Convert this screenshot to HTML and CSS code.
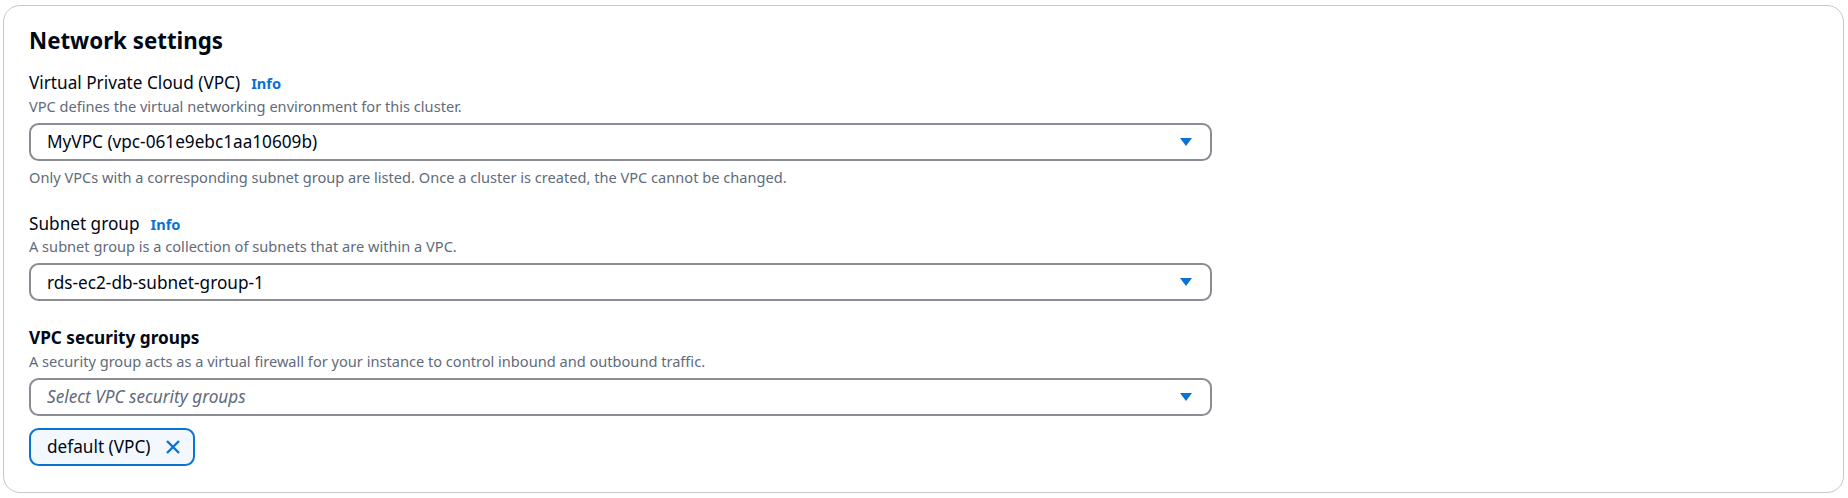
FILE: index.html
```html
<!DOCTYPE html>
<html lang="en">
<head>
<meta charset="utf-8">
<title>Network settings</title>
<link rel="stylesheet" href="styles.css">
</head>
<body>
<section class="card">
  <h2 class="card-title">Network settings</h2>

  <div class="field">
    <div class="label-row"><span class="label">Virtual Private Cloud (VPC)</span><a class="info" href="#">Info</a></div>
    <div class="desc">VPC defines the virtual networking environment for this cluster.</div>
    <div class="select">
      <span class="select-value">MyVPC (vpc-061e9ebc1aa10609b)</span>
      <svg class="caret" width="12" height="8" viewBox="0 0 12 8"><path d="M0 0 H12 L6 8 Z" fill="#0972d3"/></svg>
    </div>
    <div class="hint">Only VPCs with a corresponding subnet group are listed. Once a cluster is created, the VPC cannot be changed.</div>
  </div>

  <div class="field">
    <div class="label-row"><span class="label">Subnet group</span><a class="info" href="#">Info</a></div>
    <div class="desc">A subnet group is a collection of subnets that are within a VPC.</div>
    <div class="select">
      <span class="select-value">rds-ec2-db-subnet-group-1</span>
      <svg class="caret" width="12" height="8" viewBox="0 0 12 8"><path d="M0 0 H12 L6 8 Z" fill="#0972d3"/></svg>
    </div>
  </div>

  <div class="field">
    <div class="label-row"><span class="label label-bold">VPC security groups</span></div>
    <div class="desc">A security group acts as a virtual firewall for your instance to control inbound and outbound traffic.</div>
    <div class="select">
      <span class="select-value placeholder">Select VPC security groups</span>
      <svg class="caret" width="12" height="8" viewBox="0 0 12 8"><path d="M0 0 H12 L6 8 Z" fill="#0972d3"/></svg>
    </div>
    <div class="tokens">
      <div class="token">
        <span class="token-text">default (VPC)</span>
        <svg class="token-x" width="16" height="16" viewBox="0 0 16 16"><path d="M2 2 L14 14 M14 2 L2 14" stroke="#0972d3" stroke-width="2.4" fill="none"/></svg>
      </div>
    </div>
  </div>
</section>
</body>
</html>
```

FILE: styles.css
```css
html, body {
  margin: 0;
  padding: 0;
  background: #ffffff;
}

body {
  font-family: "Noto Sans", "Open Sans", "Liberation Sans", sans-serif;
  color: #000716;
  padding: 5px 4px 6px 3px;
}

.card {
  border: 1px solid #c6c6cd;
  border-radius: 17px;
  padding: 22px 25px 26px 25px;
}

.card-title {
  margin: 0;
  font-size: 22.3px;
  line-height: 26px;
  font-weight: 700;
}

.field {
  max-width: 1183px;
  margin-top: 25px;
}

.card-title + .field {
  margin-top: 17px;
}

.label-row {
  display: flex;
  align-items: baseline;
  gap: 11px;
  line-height: 24px;
}

.label {
  font-size: 17.2px;
}

.label-bold {
  font-weight: 700;
}

.info {
  font-size: 14.6px;
  font-weight: 700;
  color: #0972d3;
  text-decoration: none;
}

.desc,
.hint {
  font-size: 14.6px;
  line-height: 19px;
  color: #5f6b7a;
  margin-top: 1.5px;
}

.hint {
  margin-top: 7px;
}

.select {
  margin-top: 7px;
  height: 38px;
  box-sizing: border-box;
  border: 2px solid #8c8c94;
  border-radius: 9.6px;
  display: flex;
  align-items: center;
  justify-content: space-between;
  padding: 0 18px 0 16px;
}

.select-value {
  font-size: 17.2px;
}

.placeholder {
  font-style: italic;
  color: #5f6b7a;
}

.caret {
  display: block;
}

.tokens {
  margin-top: 12px;
  display: flex;
}

.token {
  height: 38px;
  box-sizing: border-box;
  border: 2px solid #0972d3;
  border-radius: 9.6px;
  background: #f2f8fd;
  display: flex;
  align-items: center;
  gap: 15px;
  padding: 0 12px 0 16px;
}

.token-text {
  font-size: 17.2px;
}

.token-x {
  display: block;
}
```
